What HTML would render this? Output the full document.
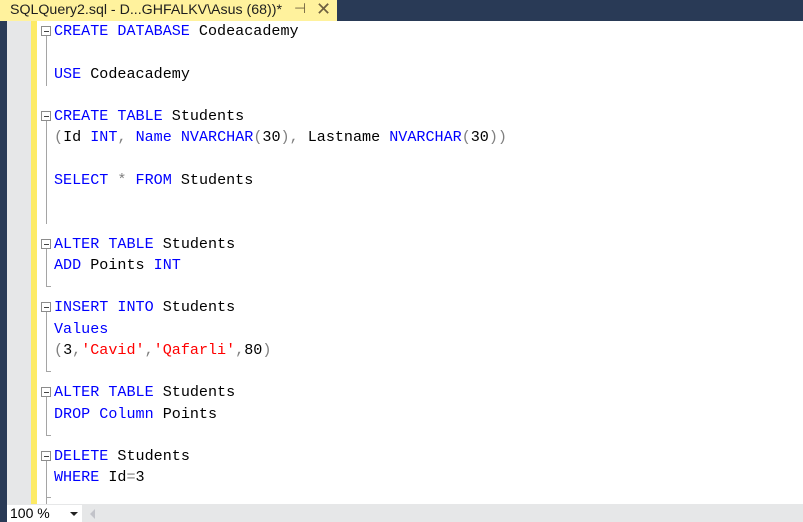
<!DOCTYPE html><html><head><style>
body{margin:0;width:803px;height:522px;overflow:hidden;background:#fff;position:relative;font-family:"Liberation Mono",monospace}
.a{position:absolute}
.l{position:absolute;left:54px;font-size:15.1px;line-height:21px;white-space:pre;color:#000}
.k{color:#0000ff}.s{color:#ff0000}.g{color:#808080}
.f{position:absolute;left:41px;width:8px;height:8px;border:1px solid #8c8c8c;background:#fff}
.f:after{content:"";position:absolute;left:2px;top:4px;width:5px;height:1px;background:#444}
.v{position:absolute;left:46px;width:1px;background:#a5a5a5}
.t{position:absolute;left:46px;width:5px;height:1px;background:#a5a5a5}
</style></head><body>
<div class="a" style="left:0;top:0;width:803px;height:21px;background:#293a56"></div>
<div class="a" style="left:0;top:0;width:337px;height:21px;background:#fff29d"></div>
<div class="a" style="left:10px;top:1px;font:14.2px 'Liberation Sans',sans-serif;color:#1e1e1e;line-height:18px">SQLQuery2.sql - D...GHFALKV\Asus (68))*</div>
<div class="a" style="left:294px;top:0px;font:14px 'Liberation Sans',sans-serif;color:#6e6040">⊣</div>
<div class="a" style="left:316px;top:-1px;font:18px 'Liberation Sans',sans-serif;color:#6e6040">✕</div>
<div class="a" style="left:0;top:21px;width:7px;height:501px;background:#293a56"></div>
<div class="a" style="left:7px;top:21px;width:24px;height:483px;background:#e6e7e8"></div>
<div class="a" style="left:31px;top:21px;width:6px;height:483px;background:#fdeb66"></div>
<div class="f" style="top:26px"></div><div class="v" style="top:36px;height:50px"></div>
<div class="f" style="top:111px"></div><div class="v" style="top:121px;height:103px"></div>
<div class="f" style="top:239px"></div><div class="v" style="top:249px;height:38px"></div><div class="t" style="top:286px"></div>
<div class="f" style="top:302px"></div><div class="v" style="top:312px;height:59px"></div><div class="t" style="top:371px"></div>
<div class="f" style="top:387px"></div><div class="v" style="top:397px;height:38px"></div><div class="t" style="top:435px"></div>
<div class="f" style="top:451px"></div><div class="v" style="top:461px;height:43px"></div><div class="t" style="top:497px"></div>
<div class="l" style="top:21px"><span class="k">CREATE DATABASE</span> Codeacademy</div>
<div class="l" style="top:64px"><span class="k">USE</span> Codeacademy</div>
<div class="l" style="top:106px"><span class="k">CREATE TABLE</span> Students</div>
<div class="l" style="top:127px"><span class="g">(</span>Id <span class="k">INT</span><span class="g">,</span> <span class="k">Name NVARCHAR</span><span class="g">(</span>30<span class="g">),</span> Lastname <span class="k">NVARCHAR</span><span class="g">(</span>30<span class="g">))</span></div>
<div class="l" style="top:170px"><span class="k">SELECT</span> <span class="g">*</span> <span class="k">FROM</span> Students</div>
<div class="l" style="top:234px"><span class="k">ALTER TABLE</span> Students</div>
<div class="l" style="top:255px"><span class="k">ADD</span> Points <span class="k">INT</span></div>
<div class="l" style="top:297px"><span class="k">INSERT INTO</span> Students</div>
<div class="l" style="top:319px"><span class="k">Values</span></div>
<div class="l" style="top:340px"><span class="g">(</span>3<span class="g">,</span><span class="s">'Cavid'</span><span class="g">,</span><span class="s">'Qafarli'</span><span class="g">,</span>80<span class="g">)</span></div>
<div class="l" style="top:382px"><span class="k">ALTER TABLE</span> Students</div>
<div class="l" style="top:404px"><span class="k">DROP Column</span> Points</div>
<div class="l" style="top:446px"><span class="k">DELETE</span> Students</div>
<div class="l" style="top:467px"><span class="k">WHERE</span> Id<span class="g">=</span>3</div>
<div class="a" style="left:7px;top:504px;width:796px;height:18px;background:#e6e7e8"></div>
<div class="a" style="left:7px;top:505px;width:75px;height:17px;background:#fff;font:14px 'Liberation Sans',sans-serif;line-height:17px;padding-left:3px;box-sizing:border-box">100 %</div>
<div class="a" style="left:70px;top:512px;width:0;height:0;border-left:4px solid transparent;border-right:4px solid transparent;border-top:4px solid #222"></div>
<div class="a" style="left:90px;top:509px;width:0;height:0;border-top:5px solid transparent;border-bottom:5px solid transparent;border-right:5px solid #c2c3c9"></div>
</body></html>
